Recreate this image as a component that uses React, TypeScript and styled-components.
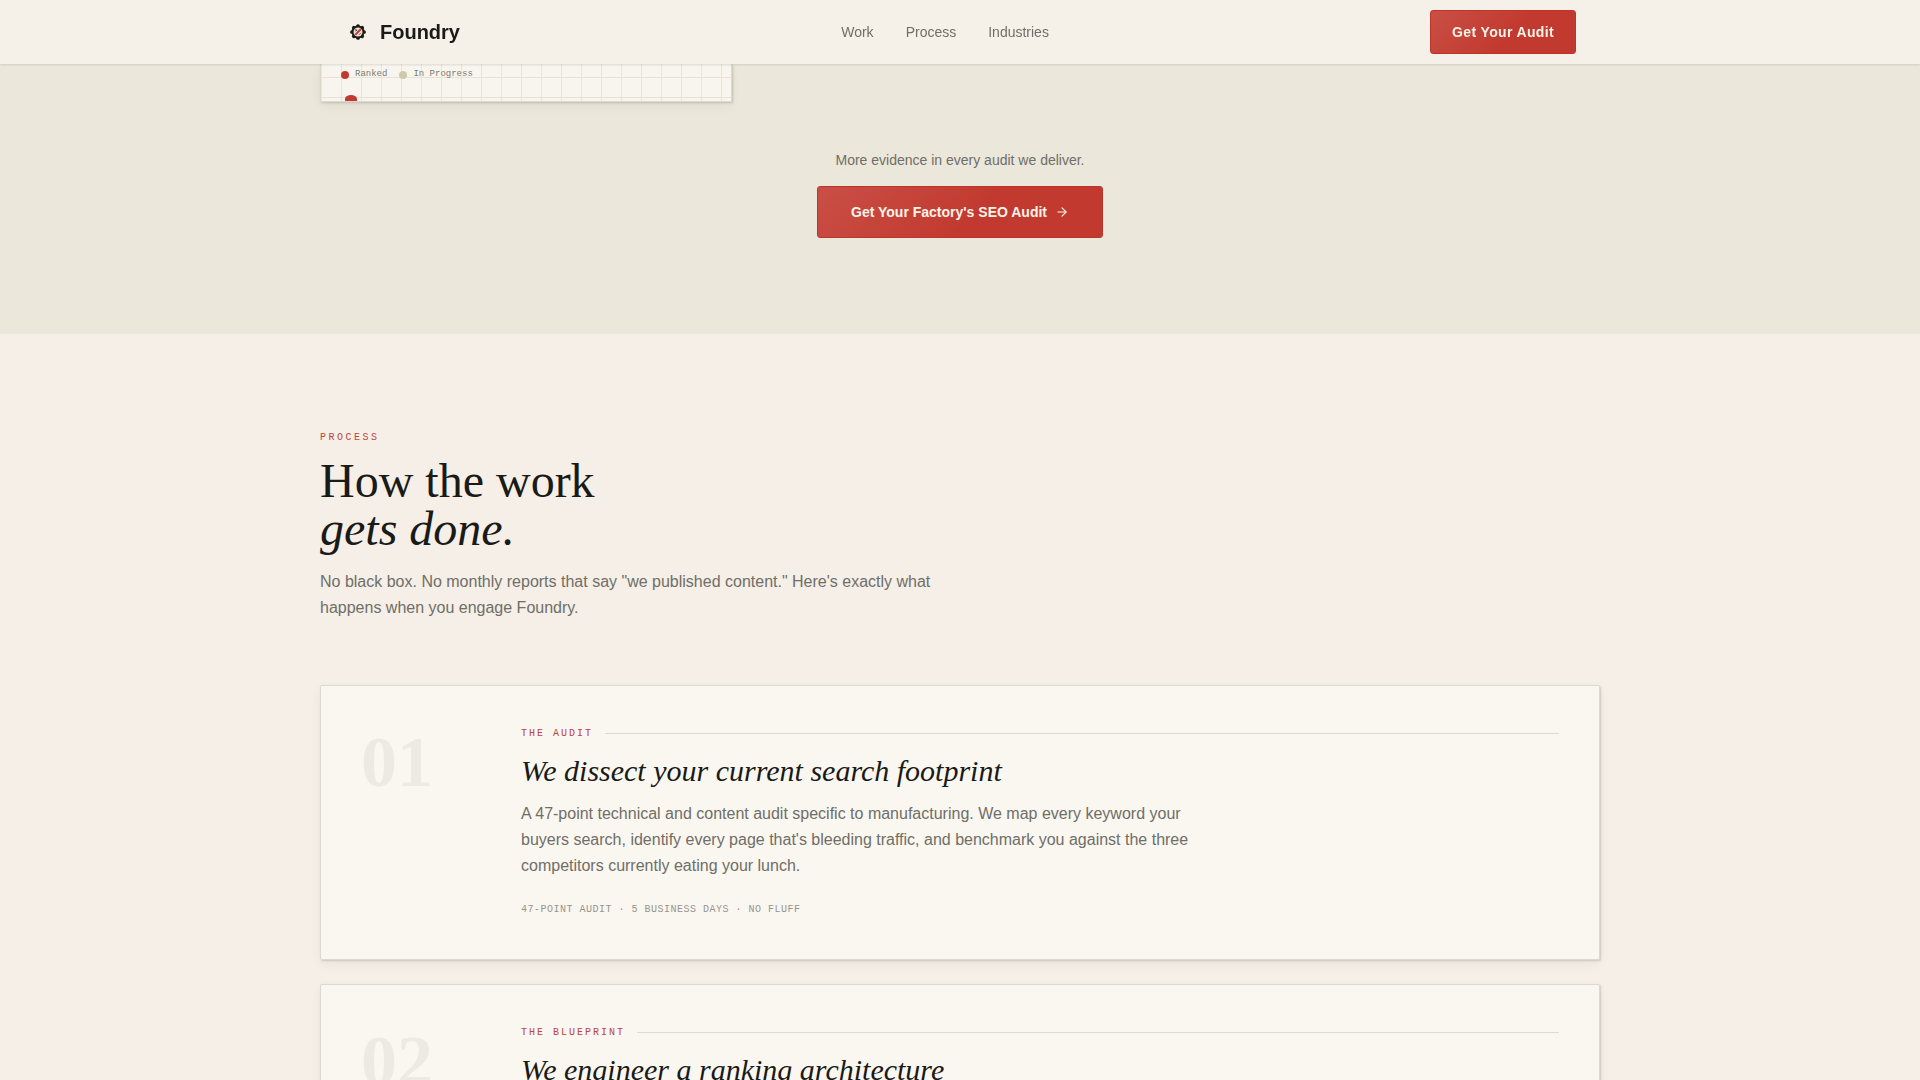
import React from "react";
import styled, { createGlobalStyle } from "styled-components";
import { ArrowRight } from "lucide-react";

const sans = `"Liberation Sans", Arial, sans-serif`;
const serif = `"Liberation Serif", "Times New Roman", serif`;
const mono = `"Liberation Mono", "Courier New", monospace`;

const GlobalStyle = createGlobalStyle`
  *, *::before, *::after { box-sizing: border-box; }
  html { overflow: hidden; }
  body {
    margin: 0;
    background: #f5efe8;
    color: #1a1a17;
    font-family: ${sans};
    font-size: 16px;
  }
  h1, h2, h3, p { margin: 0; }
  a { color: inherit; text-decoration: none; }
`;

const Page = styled.div`
  height: 100vh;
  overflow: hidden;
`;

const Header = styled.header`
  position: sticky;
  top: 0;
  z-index: 10;
  background: #f5f1e9;
  box-shadow: 0 1px 2px rgba(26, 26, 23, 0.12);
`;

const Container = styled.div`
  max-width: 1280px;
  margin: 0 auto;
`;

const Bar = styled(Container)`
  height: 64px;
  padding: 0 24px;
  display: flex;
  align-items: center;
  justify-content: space-between;
`;

const Brand = styled.a`
  display: flex;
  align-items: center;
  gap: 8px;
  font-size: 20px;
  font-weight: 700;
`;

const Nav = styled.nav`
  display: flex;
  gap: 32px;
  font-size: 14px;
  color: #6f6e67;
`;

const Button = styled.button<{ $large?: boolean }>`
  display: inline-flex;
  align-items: center;
  justify-content: center;
  gap: 8px;
  height: ${(p) => (p.$large ? 52 : 44)}px;
  padding: 0 ${(p) => (p.$large ? 33 : 21)}px;
  border: 1px solid #bd352a;
  border-radius: 3px;
  background: linear-gradient(135deg, #c94f46 0%, #c23a2f 55%, #c23a2f 100%);
  color: #faf3e8;
  font-family: ${sans};
  font-size: 14px;
  font-weight: 700;
  letter-spacing: ${(p) => (p.$large ? "normal" : "0.025em")};
  cursor: pointer;
`;

const Evidence = styled.section`
  background: #ebe7da;
  padding-bottom: 96px;
`;

const MapCard = styled.div`
  width: 412px;
  max-width: 100%;
  height: 38px;
  overflow: hidden;
  padding: 5px 20px 0;
  border: 1px solid #dcd8cc;
  border-top: 0;
  background-color: #f8f5ee;
  background-image:
    linear-gradient(to right, #e9e5dd 1px, transparent 1px),
    linear-gradient(to bottom, #e6e2d9 1px, transparent 1px);
  background-size: 20px 20px;
  background-position: 0 13px;
  box-shadow: 1px 1px 2px rgba(26, 26, 23, 0.16), 0 4px 12px rgba(26, 26, 23, 0.05);
`;

const Legend = styled.div`
  display: flex;
  gap: 12px;
  font-family: ${mono};
  font-size: 9px;
  line-height: 11px;
  color: #7c7a72;
`;

const LegendItem = styled.span`
  display: flex;
  align-items: flex-start;
  gap: 6px;
`;

const Dot = styled.i<{ $color: string }>`
  width: 8px;
  height: 8px;
  margin-top: 2px;
  border-radius: 50%;
  background: ${(p) => p.$color};
`;

const Pin = styled.div`
  width: 12px;
  height: 12px;
  margin: 15px 4px 0;
  border-radius: 6px 6px 0 0 / 4px 4px 0 0;
  background: #c23a2f;
`;

const Callout = styled.div`
  display: flex;
  flex-direction: column;
  align-items: center;
  gap: 16px;
  padding-top: 48px;
`;

const CalloutText = styled.p`
  font-size: 14px;
  line-height: 20px;
  color: #6f6e67;
`;

const Process = styled.section`
  padding: 96px 0;
`;

const Eyebrow = styled.p`
  font-family: ${mono};
  font-size: 10px;
  line-height: 15px;
  letter-spacing: 0.25em;
  text-transform: uppercase;
  color: #c0443a;
`;

const Heading = styled.h2`
  margin: 12px 0 16px;
  font-family: ${serif};
  font-size: 48px;
  line-height: 48px;
  font-weight: 400;
  em { display: block; }
`;

const Body = styled.p`
  max-width: 672px;
  font-size: 16px;
  line-height: 26px;
  color: #6f6e67;
`;

const Intro = styled(Body)`
  max-width: 640px;
`;

const Steps = styled.div`
  margin-top: 64px;
  display: flex;
  flex-direction: column;
  gap: 24px;
`;

const Card = styled.article`
  display: grid;
  grid-template-columns: 120px 1fr;
  gap: 40px;
  padding: 40px;
  border: 1px solid #dcd9ce;
  border-radius: 2px;
  background: #faf7f1;
  box-shadow: 1px 1px 2px rgba(26, 26, 23, 0.16), 0 4px 12px rgba(26, 26, 23, 0.05);
`;

const StepNumber = styled.div`
  font-family: ${serif};
  font-size: 72px;
  line-height: 72px;
  font-weight: 700;
  color: #edeae4;
`;

const StepLabel = styled.div`
  display: flex;
  align-items: center;
  gap: 12px;
  font-family: ${mono};
  font-size: 10px;
  line-height: 15px;
  letter-spacing: 0.2em;
  text-transform: uppercase;
  color: #c0443a;
  &::after {
    content: "";
    flex: 1;
    height: 1px;
    background: #dedbd2;
  }
`;

const StepTitle = styled.h3`
  margin: 12px 0;
  font-family: ${serif};
  font-size: 30px;
  line-height: 36px;
  font-style: italic;
  font-weight: 400;
`;

const StepMeta = styled.p`
  margin-top: 22px;
  font-family: ${mono};
  font-size: 10px;
  line-height: 18px;
  letter-spacing: 0.05em;
  text-transform: uppercase;
  color: #96948b;
`;

const Gear = () => (
  <svg width="28" height="28" viewBox="0 0 28 28" aria-hidden="true">
    {[0, 45, 90, 135].map((a) => (
      <rect key={a} x="12.2" y="6.2" width="3.6" height="15.6" rx="1.6" fill="#1a1a17" transform={`rotate(${a} 14 14)`} />
    ))}
    <circle cx="14" cy="14" r="6.5" fill="#1a1a17" />
    <circle cx="14" cy="14" r="4.5" fill="#e9dcd4" />
    <path d="M11.2 16.8l5.8-5.8" stroke="#c23a2f" strokeWidth="1.8" />
    <path d="M11.2 13.2l1.8-1.8M15 16.8l1.8-1.8" stroke="#9a554c" strokeWidth="1" />
    <path d="M11.4 11.4l2 2" stroke="#4c3a35" strokeWidth="0.9" />
  </svg>
);

const steps = [
  {
    number: "01",
    label: "The Audit",
    title: "We dissect your current search footprint",
    body: "A 47-point technical and content audit specific to manufacturing. We map every keyword your buyers search, identify every page that's bleeding traffic, and benchmark you against the three competitors currently eating your lunch.",
    meta: "47-point audit · 5 business days · No fluff",
  },
  {
    number: "02",
    label: "The Blueprint",
    title: "We engineer a ranking architecture",
  },
];

export default function App() {
  return (
    <Page>
      <GlobalStyle />
      <Header>
        <Bar>
          <Brand href="#">
            <Gear />
            Foundry
          </Brand>
          <Nav>
            <a href="#work">Work</a>
            <a href="#process">Process</a>
            <a href="#industries">Industries</a>
          </Nav>
          <Button type="button">Get Your Audit</Button>
        </Bar>
      </Header>
      <main>
        <Evidence id="work">
          <Container>
            <MapCard>
              <Legend>
                <LegendItem>
                  <Dot $color="#c23a2f" />
                  Ranked
                </LegendItem>
                <LegendItem>
                  <Dot $color="#cdc9aa" />
                  In Progress
                </LegendItem>
              </Legend>
              <Pin />
            </MapCard>
            <Callout>
              <CalloutText>More evidence in every audit we deliver.</CalloutText>
              <Button type="button" $large>
                Get Your Factory's SEO Audit
                <ArrowRight size={14} strokeWidth={2} />
              </Button>
            </Callout>
          </Container>
        </Evidence>
        <Process id="process">
          <Container>
            <Eyebrow>Process</Eyebrow>
            <Heading>
              How the work <em>gets done.</em>
            </Heading>
            <Intro>
              No black box. No monthly reports that say "we published content." Here's exactly what happens when you
              engage Foundry.
            </Intro>
            <Steps>
              {steps.map((s) => (
                <Card key={s.number}>
                  <StepNumber>{s.number}</StepNumber>
                  <div>
                    <StepLabel>{s.label}</StepLabel>
                    <StepTitle>{s.title}</StepTitle>
                    {s.body && <Body>{s.body}</Body>}
                    {s.meta && <StepMeta>{s.meta}</StepMeta>}
                  </div>
                </Card>
              ))}
            </Steps>
          </Container>
        </Process>
      </main>
    </Page>
  );
}
